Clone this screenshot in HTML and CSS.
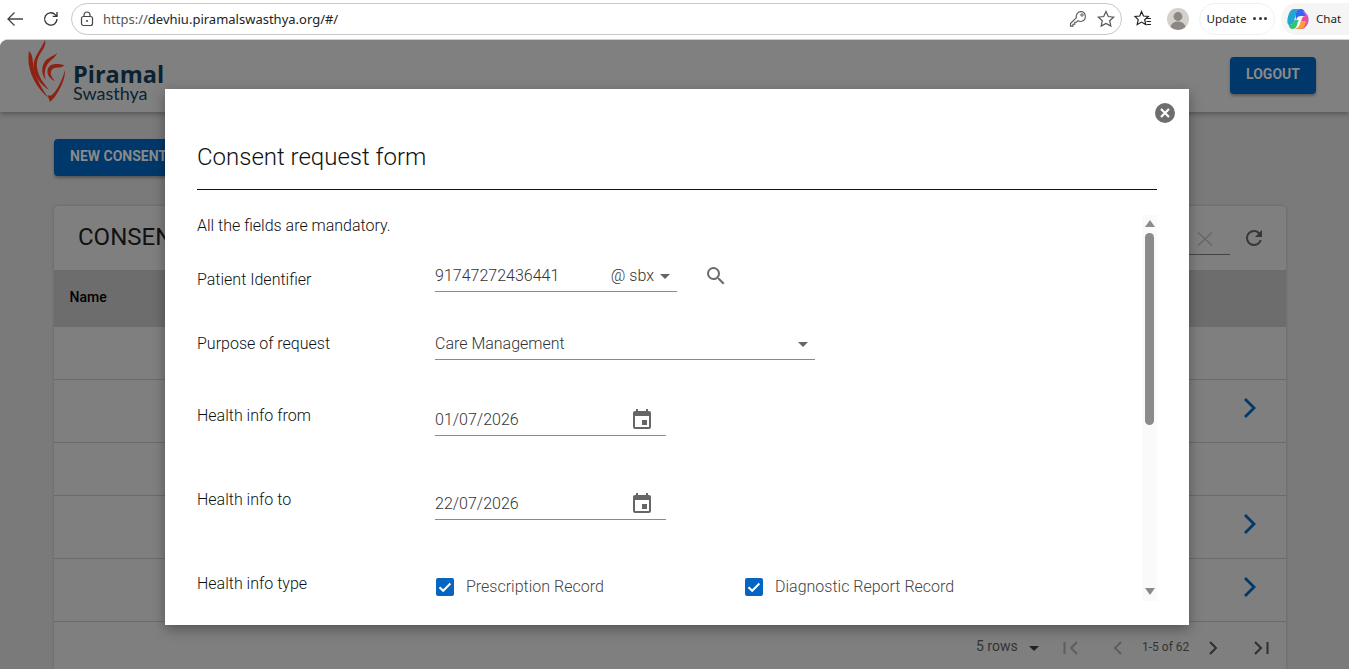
FILE: index.html
```html
<!DOCTYPE html>
<html lang="en">
<head>
<meta charset="utf-8">
<title>Consent request form</title>
<link rel="stylesheet" href="styles.css">
</head>
<body>
<div class="toolbar">
  <svg class="tb-back" width="20" height="20" viewBox="0 0 20 20"><path d="M18 10H3M9.500 3.500L3 10l6.500 6.500" fill="none" stroke="#444" stroke-width="1.300"/></svg>
  <svg class="tb-reload" width="18" height="18" viewBox="0 0 18 18"><path d="M15 9a6.200 6.200 0 1 1-1.800-4.400L15 6.300M15 2v4.300h-4.300" fill="none" stroke="#333" stroke-width="1.300"/></svg>
  <div class="omnibox">
    <svg class="lock" width="14" height="16" viewBox="0 0 14 16"><rect x="1.500" y="5.500" width="11" height="9" rx="2" fill="none" stroke="#444" stroke-width="1.200"/><path d="M4 5.500V4a3 3 0 0 1 6 0v1.500" fill="none" stroke="#444" stroke-width="1.200"/><circle cx="7" cy="10" r="1" fill="#444"/></svg>
    <span class="url"><span class="url-scheme">https://</span>devhiu.piramalswasthya.org/#/</span>
    <svg class="key" width="20" height="20" viewBox="0 0 20 20"><path d="M12.500 2.500a5 5 0 0 1 1.200 9.800 5 5 0 0 1-3.700-.6L8.500 13.200H6.800v2H5v1.900H2.500v-2.600l5.900-5.800a5 5 0 0 1 4.100-6.200z" fill="none" stroke="#555" stroke-width="1.100"/><circle cx="14" cy="6" r="1.200" fill="none" stroke="#555"/></svg>
    <svg class="star" width="20" height="20" viewBox="0 0 20 20"><path d="M10 2.500l2.300 5 5.400.6-4 3.600 1.100 5.400-4.800-2.700-4.800 2.700 1.100-5.400-4-3.600 5.400-.6z" fill="none" stroke="#555" stroke-width="1.200"/></svg>
  </div>
  <svg class="favs" width="20" height="20" viewBox="0 0 20 20"><path d="M8.500 2.500l2 4.500 4.800.5-3.600 3.200 1 4.800-4.200-2.400-4.300 2.400 1-4.800L2 7.500l4.800-.5z" fill="none" stroke="#222" stroke-width="1.200"/><path d="M13 9.500h5M13.500 12.500h4.500M13.500 15.500h4.500" stroke="#222" stroke-width="1.100"/></svg>
  <svg class="avatar" width="22" height="22" viewBox="0 0 22 22"><circle cx="11" cy="11" r="11" fill="#d4d0cc"/><circle cx="11" cy="8.500" r="4.400" fill="#8c8782"/><path d="M3.500 19c1-4 4-5.500 7.500-5.500s6.500 1.500 7.500 5.500a11 11 0 0 1-15 0z" fill="#8c8782"/></svg>
  <div class="update"><span>Update</span><span class="dots"><i></i><i></i><i></i></span></div>
  <div class="chat">
    <svg width="22" height="22" viewBox="0 0 22 22">
      <path d="M7 1h7c-2.500.5-4.500 2.500-5.200 5.500L7 13.500C6.500 15.500 5 17 3 17 .8 17 0 15 .4 12 1 7 3 1 7 1z" fill="#22a6d6"/>
      <path d="M8.500 7C9.500 3.500 11 1 14 1c1.800 0 3 1 3.500 2.500L19 8h-5c-2.500 0-4 1.200-4.500 3L9 13z" fill="#3566ec"/>
      <path d="M15.500 3c1 0 2 .5 3 1.500C21 7 22 10 21.600 13c-.5 3.500-2.500 6-5.100 7L19 8z" fill="#b85fe6"/>
      <path d="M15 21H8.500c2.500-.7 4.300-2.800 5-5.500l1.500-5c.5-1.700 2-2.500 4-2.500.5 0 1 .5 1.200 1.500.5 4-1 11.500-5.200 11.500z" fill="#ea4f96"/>
      <path d="M1.500 16c1 1 4 1.500 5-1.500L7.500 12h4l-1.700 5.500C9 20 7.500 21 5.500 21 3 21 1.800 18.500 1.500 16z" fill="#35c46e"/>
      <path d="M8 21c2.500-.5 4.500-2.500 5.300-5.500L14 13h5c-.5 4-2 8-6 8z" fill="#f7a035"/>
    </svg>
    <span>Chat</span>
  </div>
</div>

<div class="app">
  <header class="app-header">
    <div class="logo">
      <svg class="flame" width="38" height="62" viewBox="0 0 38 62">
        <path d="M17 0c1.500 5-2 9-5.500 15C8 21 8 28 11.500 36c2 4.500 5.500 9 9.500 14C13 45 6.500 37 5.500 27 4.800 17 13 10 17 0z" fill="#8e2212"/>
        <path d="M1 11c3 3 3.500 6.500 4 12 .9 11 7 23 15.500 35C10 49 2.500 37 .8 24 .3 19 .3 15 1 11z" fill="#8e2212"/>
        <path d="M29 13c-1.500 5-7 7-10 12-2.500 4.500-3 10-1 15-4.500-5-5-12-1.500-18C20 17 25 16.500 29 13z" fill="#8e2212"/>
        <path d="M36 25c-.5 1.500-2 2.500-5 2.500-4 0-7 .5-8 4-.8 3 .5 6 4 9.500-5-2-8-6-7.500-10.500.5-4.500 4.500-6.500 8.500-6.500 3 0 6 .5 8 1z" fill="#8e2212"/>
        <path d="M37 30c.3 8-3 15-6.500 21-2.300 4-5 8-8.500 11l-2.500-7c3.500 2 5.500-.5 8-4 3.500-5 7-12 9.500-21z" fill="#8e2212"/>
      </svg>
      <div class="logo-text"><span class="logo-name">Piramal</span><span class="logo-sub">Swasthya</span></div>
    </div>
    <button class="btn logout">LOGOUT</button>
  </header>
  <main class="app-main">
    <button class="btn new-consent">NEW CONSENT</button>
    <section class="card">
      <div class="card-head">
        <h2 class="card-title">CONSENT</h2>
        <div class="card-tools">
          <div class="search"><svg width="20" height="20" viewBox="0 0 20 20"><path d="M3 3.500l14 13M17 3.500l-14 13" stroke="#666" stroke-width="1.400"/></svg></div>
          <svg class="refresh" width="24" height="24" viewBox="0 0 24 24"><path d="M17.650 6.350A7.960 7.960 0 0 0 12 4a8 8 0 1 0 7.730 10h-2.080A6 6 0 1 1 12 6c1.660 0 3.140.69 4.220 1.780L13 11h7V4l-2.350 2.350z" fill="#383838"/></svg>
        </div>
      </div>
      <div class="thead">Name</div>
      <div class="trow r53"></div>
      <div class="trow r63"><svg class="chev" width="16" height="24" viewBox="0 0 16 24"><path d="M3 3l9 9-9 9" fill="none" stroke="#00386b" stroke-width="2.800"/></svg></div>
      <div class="trow r53"></div>
      <div class="trow r63"><svg class="chev" width="16" height="24" viewBox="0 0 16 24"><path d="M3 3l9 9-9 9" fill="none" stroke="#00386b" stroke-width="2.800"/></svg></div>
      <div class="trow r63"><svg class="chev" width="16" height="24" viewBox="0 0 16 24"><path d="M3 3l9 9-9 9" fill="none" stroke="#00386b" stroke-width="2.800"/></svg></div>
      <div class="tfoot">
        <span class="rows">5 rows</span>
        <span class="rows-caret"></span>
        <svg class="pg pg-first" width="18" height="16" viewBox="0 0 18 16"><path d="M2.500 2v12M15 2L9 8l6 6" fill="none" stroke="#5e5e5e" stroke-width="2"/></svg>
        <svg class="pg pg-prev" width="10" height="16" viewBox="0 0 10 16"><path d="M8 2L2 8l6 6" fill="none" stroke="#5e5e5e" stroke-width="2"/></svg>
        <span class="range">1-5 of 62</span>
        <svg class="pg pg-next" width="10" height="16" viewBox="0 0 10 16"><path d="M2 2l6 6-6 6" fill="none" stroke="#2f2f2f" stroke-width="2"/></svg>
        <svg class="pg pg-last" width="18" height="16" viewBox="0 0 18 16"><path d="M3 2l6 6-6 6M15.500 2v12" fill="none" stroke="#2f2f2f" stroke-width="2"/></svg>
      </div>
    </section>
  </main>
</div>

<div class="modal">
  <button class="close" aria-label="Close"><svg width="20" height="20" viewBox="0 0 20 20"><circle cx="10" cy="10" r="10" fill="#6e6e6e"/><path d="M6 6l8 8M14 6l-8 8" stroke="#fff" stroke-width="2.200"/></svg></button>
  <h1 class="modal-title">Consent request form</h1>
  <div class="modal-body">
    <form class="form">
      <p class="intro">All the fields are mandatory.</p>
      <div class="row row-68">
        <label class="lbl">Patient Identifier</label>
        <div class="with-action">
          <div class="field w242"><span class="grow">91747272436441</span><span class="suffix">@ sbx</span><span class="caret"></span></div>
          <svg class="search-ic" width="24" height="24" viewBox="0 0 24 24"><path d="M15.500 14h-.79l-.28-.27A6.470 6.470 0 0 0 16 9.500 6.500 6.500 0 1 0 9.500 16c1.610 0 3.090-.59 4.230-1.570l.27.28v.79l5 4.990L20.490 19l-4.990-5zm-6 0C7.010 14 5 11.990 5 9.500S7.010 5 9.500 5 14 7.010 14 9.500 11.990 14 9.500 14z" fill="#6b6b6b"/></svg>
        </div>
      </div>
      <div class="row row-68">
        <label class="lbl lbl-tight">Purpose of request</label>
        <div class="field w380"><span class="grow">Care Management</span><span class="caret"></span></div>
      </div>
      <div class="row row-84">
        <label class="lbl">Health info from</label>
        <div class="field w231 down"><span class="grow">01/07/2026</span><svg class="cal" width="24" height="24" viewBox="0 0 24 24"><path d="M17 12h-5v5h5v-5zM16 1v2H8V1H6v2H5c-1.110 0-1.990.9-1.990 2L3 19a2 2 0 0 0 2 2h14c1.100 0 2-.9 2-2V5c0-1.100-.9-2-2-2h-1V1h-2zm3 18H5V8h14v11z" fill="#666"/></svg></div>
      </div>
      <div class="row row-84">
        <label class="lbl">Health info to</label>
        <div class="field w231 down"><span class="grow">22/07/2026</span><svg class="cal" width="24" height="24" viewBox="0 0 24 24"><path d="M17 12h-5v5h5v-5zM16 1v2H8V1H6v2H5c-1.110 0-1.990.9-1.990 2L3 19a2 2 0 0 0 2 2h14c1.100 0 2-.9 2-2V5c0-1.100-.9-2-2-2h-1V1h-2zm3 18H5V8h14v11z" fill="#666"/></svg></div>
      </div>
      <div class="row row-84">
        <label class="lbl">Health info type</label>
        <div class="checks">
          <div class="check"><span class="box"><svg width="18" height="18" viewBox="0 0 18 18"><path d="M3.500 9.200l3.700 3.600 7.200-7.300" fill="none" stroke="#fff" stroke-width="2"/></svg></span><span>Prescription Record</span></div>
          <div class="check"><span class="box"><svg width="18" height="18" viewBox="0 0 18 18"><path d="M3.500 9.200l3.700 3.600 7.200-7.300" fill="none" stroke="#fff" stroke-width="2"/></svg></span><span>Diagnostic Report Record</span></div>
        </div>
      </div>
    </form>
    <div class="scrollbar">
      <span class="sb-up"></span>
      <span class="sb-thumb"></span>
      <span class="sb-down"></span>
    </div>
  </div>
</div>
</body>
</html>
```
FILE: styles.css
```css
* { box-sizing: border-box; }
html, body { margin: 0; height: 100%; }
body {
  width: 1349px;
  height: 669px;
  overflow: hidden;
  position: relative;
  font-family: Roboto, "Liberation Sans", sans-serif;
  background: #fff;
}
.toolbar {
  height: 39px;
  display: flex;
  align-items: center;
  padding-bottom: 2px;
  background: #fff;
  font-family: "Noto Sans", "Open Sans", sans-serif;
  color: #222;
}
.tb-back { margin-left: 5px; }
.tb-reload { margin-left: 17px; }
.omnibox {
  margin-left: 11px;
  width: 1051px;
  height: 32px;
  border: 1px solid #c8c8c8;
  border-radius: 16px;
  display: flex;
  align-items: center;
  padding: 0 5px 0 8px;
}
.lock { flex: none; }
.url { margin-left: 9px; flex: 1; font-size: 13px; color: #222; white-space: nowrap; }
.url-scheme { color: #555; }
.key { margin-right: 8px; }
.favs { margin-left: 11px; }
.avatar { margin-left: 14px; }
.update {
  margin-left: 10px;
  width: 76px;
  height: 32px;
  border: 1px solid #f0f0f0;
  border-radius: 16px;
  display: flex;
  align-items: center;
  justify-content: center;
  gap: 7px;
  font-size: 11.600px;
}
.dots { display: flex; gap: 2.500px; }
.dots i { width: 3px; height: 3px; border-radius: 50%; background: #333; }
.chat {
  margin-left: 6px;
  flex: 1;
  height: 32px;
  background: #f5f5f5;
  border-radius: 16px 0 0 16px;
  display: flex;
  align-items: center;
  gap: 7px;
  padding-left: 6px;
  font-size: 11.600px;
}
.app {
  height: 630px;
  background: #7a7a7a;
  border-top: 1px solid #d0d0d0;
  border-radius: 8px 0 0 0;
  overflow: hidden;
}
.app-header {
  height: 72px;
  background: #808080;
  box-shadow: 0 2px 5px rgba(0,0,0,.3);
  display: flex;
  justify-content: space-between;
  align-items: flex-start;
  padding: 0 33px 0 28px;
  position: relative;
}
.logo { display: flex; align-items: flex-start; gap: 7px; }
.flame { flex: none; }
.logo-text { display: flex; flex-direction: column; padding-top: 21px; color: #0b2231; font-family: "Open Sans", sans-serif; }
.logo-name { font-size: 23.500px; font-weight: 700; line-height: 26px; }
.logo-sub { font-size: 18px; line-height: 12px; font-family: Lato, sans-serif; }
.btn {
  border: 0;
  border-radius: 4px;
  background: #00386b;
  color: #8a8a8a;
  font: 700 14px/35px Roboto, sans-serif;
  height: 37px;
  padding: 0 0 2px;
  box-shadow: 0 2px 3px rgba(0,0,0,.3);
  text-align: center;
}
.logout { width: 86px; margin-top: 17px; }
.app-main { padding: 27px 63px 0 54px; }
.new-consent { display: block; width: 200px; padding-left: 16px; text-align: left; }
.card {
  margin-top: 30px;
  background: #7f7f7f;
  border-radius: 4px 4px 0 0;
  box-shadow: 0 0 3px rgba(0,0,0,.2);
}
.card-head { height: 64px; display: flex; justify-content: space-between; align-items: center; padding: 0 20px 0 24px; }
.card-title { margin: 0 0 3px; font-size: 24px; font-weight: 400; color: #111; }
.card-tools { display: flex; align-items: center; gap: 12px; }
.search { width: 60px; height: 34px; border-bottom: 1px solid #444; display: flex; justify-content: flex-end; align-items: center; padding: 2px 15px 0 0; }
.thead { height: 57px; background: #6d6d6d; font-size: 14px; font-weight: 500; color: #000; line-height: 54px; padding-left: 15.500px; }
.trow { display: flex; justify-content: flex-end; align-items: center; padding: 0 28px 6px 0; border-bottom: 1px solid #6b6b6b; }
.r53 { height: 53px; }
.r63 { height: 63px; }
.tfoot { height: 48px; display: flex; align-items: center; font-size: 14px; color: #333; padding: 0 0 0 922px; }
.rows { width: 47px; }
.rows-caret { width: 0; height: 0; border: 5px solid transparent; border-top-color: #222; border-bottom: 0; margin: 4px 0 0 6px; }
.pg { flex: none; margin-top: 4px; }
.pg-first { margin-left: 23px; }
.pg-prev { margin-left: 33px; }
.range { margin: 2px 0 0 19px; font-size: 12px; width: 64px; }
.pg-next { margin-left: 2px; }
.pg-last { margin-left: 34px; }

.modal {
  position: absolute;
  left: 165px;
  top: 89px;
  width: 1024px;
  height: 536px;
  background: #fff;
  box-shadow: 0 4px 12px rgba(0,0,0,.35);
  padding: 0 32px;
  color: #444;
}
.close { position: absolute; top: 14px; right: 14px; width: 20px; height: 20px; padding: 0; border: 0; background: none; }
.close svg { display: block; }
.modal-title {
  margin: 0;
  height: 101px;
  padding-top: 51px;
  border-bottom: 1px solid #111;
  font-size: 24px;
  font-weight: 300;
  line-height: 34px;
  color: #111;
}
.modal-body { display: flex; height: 386px; margin-top: 25px; }
.form { flex: 1; overflow: hidden; min-width: 0; }
.intro { margin: 0 0 21px; height: 22px; font-size: 16px; font-weight: 300; line-height: 22px; color: #111; }
.row { display: grid; grid-template-columns: 238px 1fr; align-items: start; }
.row-68 { height: 68px; }
.row-84 { height: 84px; }
.lbl { padding-top: 11px; font-size: 16px; font-weight: 300; line-height: 22px; color: #111; }
.lbl-tight { padding-top: 7px; }
.with-action { display: flex; align-items: flex-start; gap: 27px; }
.field {
  height: 34px;
  display: flex;
  align-items: flex-start;
  padding-top: 7px;
  border-bottom: 1px solid #8a8a8a;
  font-size: 16px;
  line-height: 22px;
  color: #333;
  font-weight: 300;
}
.w242 { width: 242px; padding-right: 7px; }
.w380 { width: 380px; padding-right: 7px; }
.w231 { width: 231px; padding-right: 12px; }
.down { margin-top: 8px; }
.grow { flex: 1; }
.suffix { margin-right: 6px; margin-left: -1px; }
.caret { width: 0; height: 0; border: 5px solid transparent; border-top-color: #666; border-bottom: 0; margin-top: 9px; }
.search-ic { margin-top: 6px; }
.cal { margin-top: -1px; }
.checks { display: flex; margin-top: 16px; }
.check { display: flex; align-items: center; gap: 12px; width: 309px; padding-left: 1px; font-size: 16px; font-weight: 300; color: #444; line-height: 18px; }
.box { width: 18px; height: 18px; border-radius: 2px; background: #0565c0; flex: none; }
.box svg { display: block; }
.scrollbar { width: 15px; background: #fafafa; display: flex; flex-direction: column; align-items: center; }
.sb-up { width: 0; height: 0; border: 5px solid transparent; border-bottom: 7px solid #8b8b8b; border-top: 0; margin-top: 5px; }
.sb-thumb { width: 9px; height: 192px; background: #8b8b8b; border-radius: 5px; margin-top: 6px; }
.sb-down { width: 0; height: 0; border: 5px solid transparent; border-top: 7px solid #8b8b8b; border-bottom: 0; margin-top: auto; margin-bottom: 6px; }
```
